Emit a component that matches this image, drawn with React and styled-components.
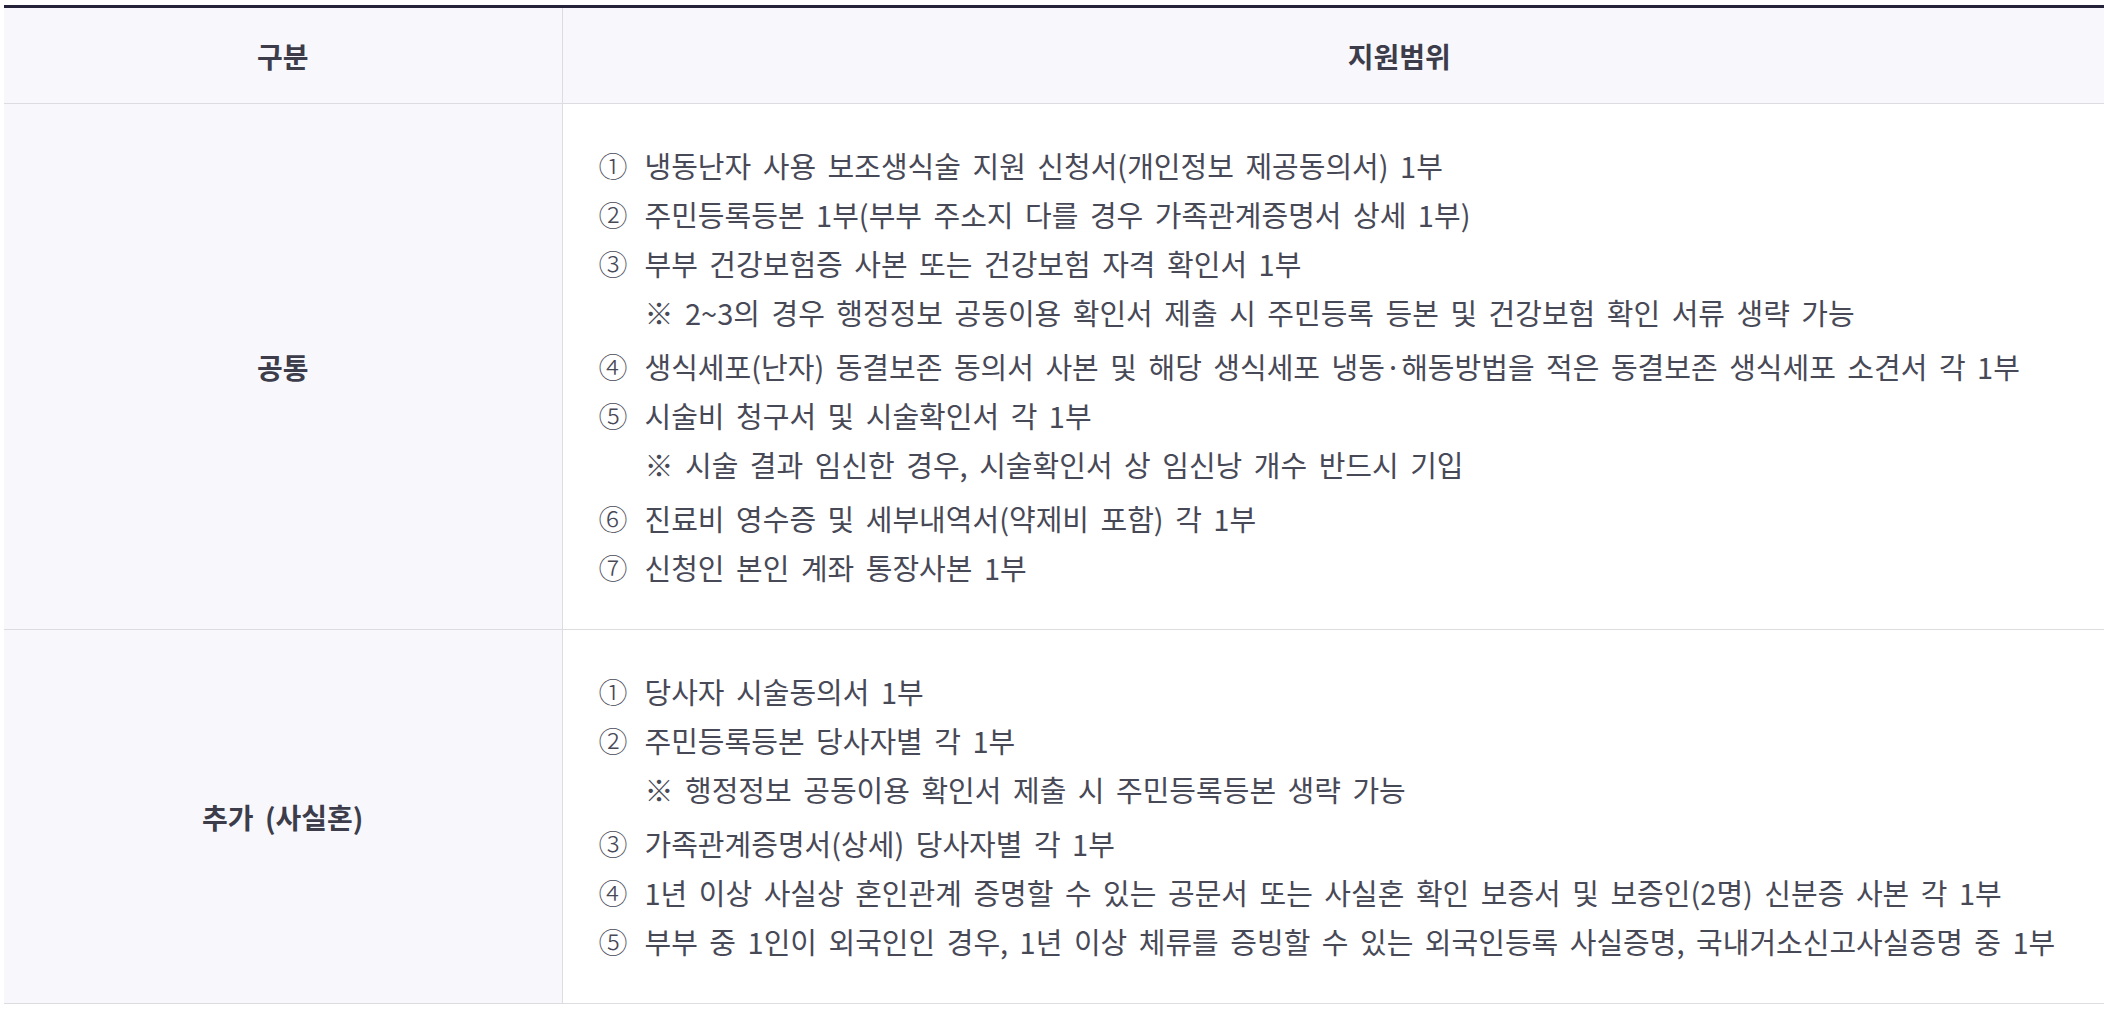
import React from "react";
import styled, { createGlobalStyle } from "styled-components";

const rows = [
  {
    label: "공통",
    items: [
      { num: "①", text: "냉동난자 사용 보조생식술 지원 신청서(개인정보 제공동의서) 1부" },
      { num: "②", text: "주민등록등본 1부(부부 주소지 다를 경우 가족관계증명서 상세 1부)" },
      {
        num: "③",
        text: "부부 건강보험증 사본 또는 건강보험 자격 확인서 1부",
        note: "2~3의 경우 행정정보 공동이용 확인서 제출 시 주민등록 등본 및 건강보험 확인 서류 생략 가능",
      },
      { num: "④", text: "생식세포(난자) 동결보존 동의서 사본 및 해당 생식세포 냉동·해동방법을 적은 동결보존 생식세포 소견서 각 1부" },
      {
        num: "⑤",
        text: "시술비 청구서 및 시술확인서 각 1부",
        note: "시술 결과 임신한 경우, 시술확인서 상 임신낭 개수 반드시 기입",
      },
      { num: "⑥", text: "진료비 영수증 및 세부내역서(약제비 포함) 각 1부" },
      { num: "⑦", text: "신청인 본인 계좌 통장사본 1부" },
    ],
  },
  {
    label: "추가 (사실혼)",
    items: [
      { num: "①", text: "당사자 시술동의서 1부" },
      {
        num: "②",
        text: "주민등록등본 당사자별 각 1부",
        note: "행정정보 공동이용 확인서 제출 시 주민등록등본 생략 가능",
      },
      { num: "③", text: "가족관계증명서(상세) 당사자별 각 1부" },
      { num: "④", text: "1년 이상 사실상 혼인관계 증명할 수 있는 공문서 또는 사실혼 확인 보증서 및 보증인(2명) 신분증 사본 각 1부" },
      { num: "⑤", text: "부부 중 1인이 외국인인 경우, 1년 이상 체류를 증빙할 수 있는 외국인등록 사실증명, 국내거소신고사실증명 중 1부" },
    ],
  },
];

export default function App() {
  return (
    <>
      <GlobalStyle />
      <Page>
        <Table>
          <colgroup>
            <col style={{ width: "558px" }} />
            <col />
          </colgroup>
          <thead>
            <tr>
              <HeadCell>구분</HeadCell>
              <HeadCell>지원범위</HeadCell>
            </tr>
          </thead>
          <tbody>
            {rows.map((row) => (
              <tr key={row.label}>
                <LabelCell>{row.label}</LabelCell>
                <ContentCell>
                  {row.items.map((item) => (
                    <Item key={item.num}>
                      <Line>
                        <Num>{item.num}</Num>
                        <span>{item.text}</span>
                      </Line>
                      {item.note && <Note>※ {item.note}</Note>}
                    </Item>
                  ))}
                </ContentCell>
              </tr>
            ))}
          </tbody>
        </Table>
      </Page>
    </>
  );
}

const GlobalStyle = createGlobalStyle`
  html, body {
    margin: 0;
    padding: 0;
    background: #ffffff;
    overflow: hidden;
  }
  body {
    font-family: "Noto Sans CJK KR", "Noto Sans", sans-serif;
    color: #484957;
  }
`;

const Page = styled.div`
  padding: 5px 0 0 4px;
  width: 2300px;
`;

const Table = styled.table`
  width: 2232px;
  border-collapse: collapse;
  table-layout: fixed;
  border-top: 3px solid #25233a;
`;

const HeadCell = styled.th`
  height: 95px;
  padding: 0;
  background: #f7f7fc;
  color: #3c3c4a;
  font-size: 28px;
  font-weight: 700;
  text-align: center;
  border-bottom: 1px solid #dcdce1;
  & + & {
    border-left: 1px solid #dcdce1;
  }
`;

const LabelCell = styled.td`
  padding: 0;
  background: #f7f7fc;
  color: #3c3c4a;
  font-size: 28px;
  font-weight: 700;
  word-spacing: 5px;
  text-align: center;
  vertical-align: middle;
  border-bottom: 1px solid #dcdce1;
  border-right: 1px solid #dcdce1;
`;

const ContentCell = styled.td`
  padding: 37px 36px 37px 36px;
  background: #ffffff;
  border-bottom: 1px solid #dcdce1;
  vertical-align: middle;
`;

const Item = styled.div`
  font-size: 29px;
  line-height: 49px;
  word-spacing: 5px;
  white-space: nowrap;
`;

const Line = styled.div`
  display: flex;
  align-items: baseline;
`;

const Num = styled.span`
  flex: 0 0 46px;
  font-weight: 300;
`;

const Note = styled.div`
  padding-left: 46px;
  margin-bottom: 5px;
`;
